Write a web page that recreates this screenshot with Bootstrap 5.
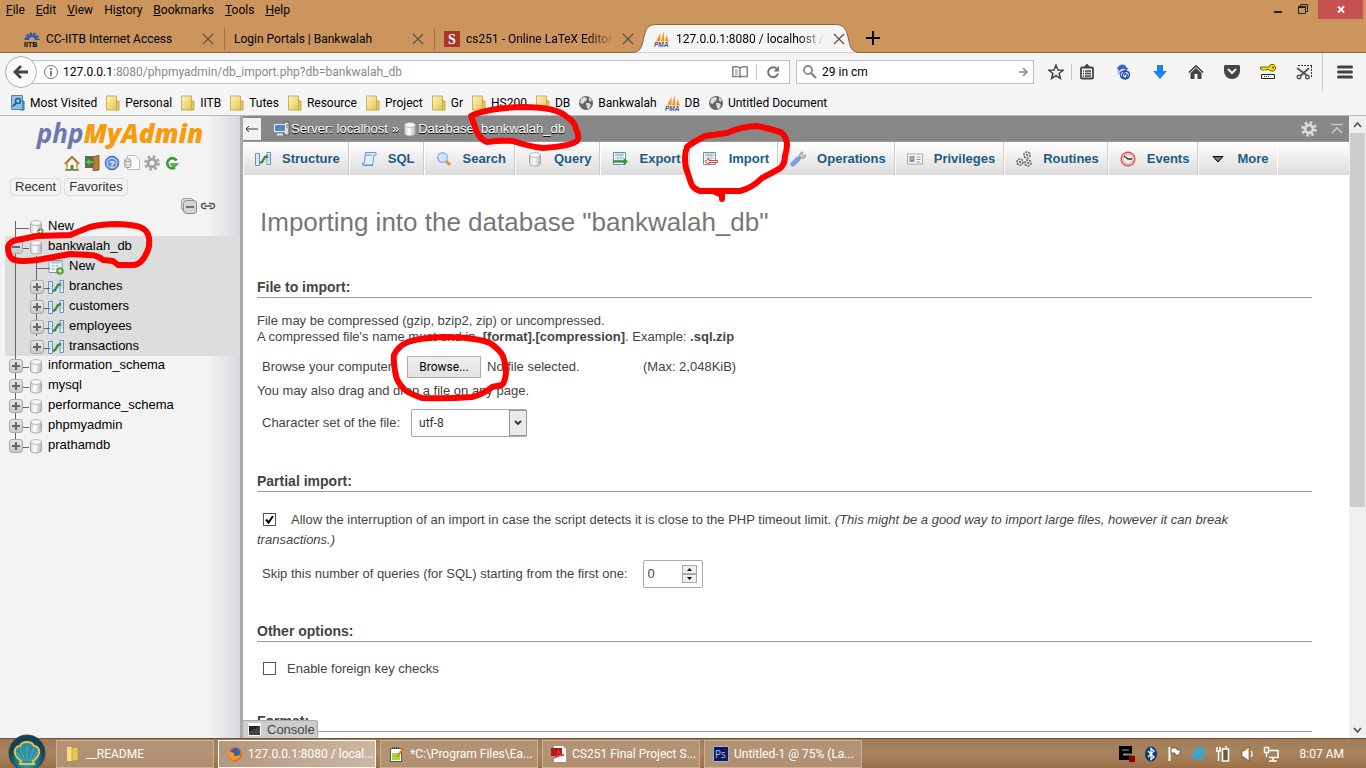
<!DOCTYPE html>
<html lang="en">
<head>
<meta charset="utf-8">
<meta name="viewport" content="width=device-width, initial-scale=1">
<title>127.0.0.1:8080 / localhost / bankwalah_db | phpMyAdmin</title>
<link href="https://cdn.jsdelivr.net/npm/bootstrap@5.3.0/dist/css/bootstrap.min.css" rel="stylesheet">
<style>
:root{--ui:Roboto,"Open Sans",sans-serif;--pma:"Liberation Sans",Arial,sans-serif}
body{font:12px/16px var(--ui);color:#000;background:#f5f5f5}
a{color:inherit;text-decoration:none}
button{font:inherit;color:inherit;background:none;border:0;padding:0}
svg{display:block;flex:none}
.i16{width:16px;height:16px}
/* browser frame */
.frame-top{background:#cc955d;height:53px;border-bottom:1px solid #8a653f}
.menus{height:20px;padding-left:6px;gap:11px}
.winctl{right:3px;top:0;height:19px}
.winctl button{width:26px;height:19px}
.winctl .wclose{width:45px;margin-left:2px;background:#c75050}
.tabstrip{height:32px;padding-left:15px}
.ftab{width:210px;height:22px;padding:0 8px 0 9px;gap:6px;margin-top:5px;border-right:1px solid #9f7246}
.ftab.last{border-color:transparent}
.fade-end{min-width:0;overflow:hidden;-webkit-mask-image:linear-gradient(90deg,#000 82%,transparent);mask-image:linear-gradient(90deg,#000 82%,transparent)}
.ftab-on{width:210px;height:29px;margin-top:4px;padding:1px 8px 0 9px;gap:6px}
.ftab-on>.shape{left:-12px;top:0;width:226px;height:29px}
.newtab{margin:4px 0 0 10px}
.toolrow{height:38px;padding-left:5px}
.backbtn{width:32px;height:32px;border-radius:50%;border:1px solid #a9b0b8;background:#fbfbfb;z-index:2}
.field{height:24px;background:#fff;border:1px solid #b9c1ca}
.field input{border:0;outline:0;background:none;font:inherit;min-width:0;padding:0}
.urlbox{margin-left:-12px;padding:0 0 0 17px}
.urlrest{color:#888}
.searchbox{width:238px;margin-left:6px;padding:0 5px;gap:4px}
.starbtn{padding:0 7px 0 14px}
.tbtn{width:36px;height:30px}
.tbtn.tight{width:30px}
.vsep{width:1px;background:#c8c8c8;height:16px}
.menubtn{padding:0 13px 0 14px}
.marks{height:25px;padding-left:10px;gap:8px;border-bottom:1px solid #b9b9b9}
.marks a{gap:4px}
/* phpMyAdmin */
.pma{font:13px/16px var(--pma);color:#444;min-height:0}
.side{width:240px;background:linear-gradient(90deg,#f3f3f3 87%,#d8dade);color:#000}
.side-grip{width:3px;background:#aaa}
.logo{font:italic 700 26px/32px "Open Sans","Noto Sans",sans-serif;color:#6c78af;height:38px;padding-top:1px}
.logo b{color:#f89c0e}
.side-icons{height:18px;gap:4px;padding-left:4px}
.pill{padding:6px 0 0 10px;gap:3px}
.pill button{border:1px solid #ddd;border-radius:4px;height:18px;padding:0 4px;color:#333;line-height:16px}
.panelctl{padding:2px 24px 2px 0;gap:3px}
.tree{padding-left:5px}
.tree ul{list-style:none;margin:0;padding:0}
.node{height:20px;position:relative}
.node>svg{margin-right:4px;margin-top:2px}
.tree>ul>li>.node{padding-left:23px}
.tree .kid{padding-left:43px}
.kid>svg{margin-right:5px}
.pm{position:absolute;width:14px;height:14px;border:1px solid #aaa;border-radius:3px;background:linear-gradient(#e6e6e6,#c9c9c9);left:4px;top:4px;z-index:1}
.pm::before,.pm.plus::after{content:"";position:absolute;background:#666;left:2px;top:5px;width:8px;height:2px}
.pm.plus::after{left:5px;top:2px;width:2px;height:8px}
.kid .pm{left:25px}
.node::before{content:"";position:absolute;left:10px;top:0;bottom:0;border-left:1px solid #666}
.node::after{content:"";position:absolute;left:11px;top:12px;width:13px;border-top:1px solid #666}
.tree .first::before{top:5px}
.tree .end::before{bottom:10px}
.kid::after{left:32px}
.kid i{position:absolute;left:31px;top:0;bottom:0;border-left:1px solid #666}
.open{background:#ddd;margin-bottom:-1px}
.crumbs{height:26px;background:#888;border-bottom:1px solid #999;color:#fff;text-shadow:0 1px 0 #000}
.hide-nav{width:18px;height:22px;background:#f2f2f2;color:#333;text-shadow:none}
.crumbs .trail{padding-left:13px}
.crumbs .sep{margin:0 3px 0 4px}
.topmenu{height:33px;background:linear-gradient(#fff,#dcdcdc);font-weight:700}
.topmenu a{color:#235a81;height:33px;padding:0 8px 0 11px;gap:11px;border-right:1px solid #ccc;border-left:1px solid #fff}
.topmenu a.on{background:#fff}
.topmenu a.more{border-color:#fff}
.sheet{padding:0 37px 0 14px;background:#fff;min-height:0}
.sheet h2{font:26px/32px var(--pma);color:#777;margin:31px 0 39px 3px}
.sheet h3{font:bold 14px/20px var(--pma);color:#444;border-bottom:1px solid #999;margin:0}
.s1{height:194px}.s2{height:150px}.s3{height:90px}
.note{padding-top:15px}
.in5{padding-left:5px}
.browse-row{height:44px}
.browse-row label{width:145px}
.picked{width:162px;padding-left:6px}
.drag{line-height:20px;margin-top:-8px}
.cs-row{padding-top:8px}
.allow{padding:18px 30px 0 0;line-height:20px}
.allow label{margin-left:15px}
.skip-row{padding-top:10px}
.fk-row{padding-top:17px;line-height:20px}
.fk-row label{margin-left:11px}
.browse{font:12px/18px var(--ui);border:1px solid #acacac;background:linear-gradient(#f0f0f0,#e2e2e2);color:#000;width:74px;height:22px}
.selwrap{width:116px;height:28px;margin-left:11px}
.selwrap select{appearance:none;width:100%;height:100%;border:1px solid #aaa;border-radius:2px;background:#fff;padding:0 7px;font:12px/20px var(--ui);color:#333}
.selwrap span{right:0;top:1px;width:18px;height:26px;border:1px solid #999;background:#eaeaea;pointer-events:none}
.tick{appearance:none;width:13px;height:13px;border:1px solid #555;background:#fff;margin:0 0 0 1px;vertical-align:-2px}
.tick:checked{background:#fff url("data:image/svg+xml,%3Csvg xmlns='http://www.w3.org/2000/svg' viewBox='0 0 11 11'%3E%3Cpath d='M2 5.5l2.5 3L9 2' fill='none' stroke='%23000' stroke-width='2'/%3E%3C/svg%3E")}
.numwrap{width:60px;height:28px;border:1px solid #aaa;border-radius:2px;background:#fff;margin-left:15px;padding:0 5px 0 4px}
.numwrap input{appearance:textfield;border:0;outline:0;width:34px;font:inherit;color:#444;padding:0}
.numwrap input::-webkit-inner-spin-button{display:none}
.spin{width:15px}
.spin button{height:9px;width:15px;border:1px solid #aaa;background:#eee}
.console{left:0;bottom:0;height:18px;width:75px;background:#ccc;border:1px solid #aaa;border-bottom:0;border-left:0;border-top-right-radius:3px;padding-left:5px;gap:6px}
.sbar{width:17px;background:#f0f0f0;padding:0 1px}
.sbar .cap{height:17px}
.sbar .thumb{height:374px;background:#cdcdcd}
/* taskbar */
.taskbar{height:30px;background:linear-gradient(#a07b59,#a9845f 45%,#9b7048);border-top:1px solid #76502e;color:#fff;padding-left:56px}
.task{width:158px;height:28px;border:1px solid #cbb296;background:#b5977acc;padding:0 8px;gap:5px;margin-right:4px}
.task.on{border-color:#fff;background:linear-gradient(100deg,#b3967b,#cdb8a4)}
.task span{white-space:nowrap}
.startbtn{left:8px;bottom:-4px;width:38px;height:38px}
.tray{gap:8px;padding-right:22px}
.clock{margin-left:13px}
.ink{inset:0;pointer-events:none;z-index:9}
</style>
</head>
<body class="vh-100 d-flex flex-column overflow-hidden position-relative">
<svg width="0" height="0" class="position-absolute" aria-hidden="true"><defs>
<symbol id="x" viewBox="0 0 16 16"><path d="M3 3l10 10M13 3L3 13" stroke="#5f5040" stroke-width="1.2"/></symbol>
<linearGradient id="gF" x2="1" y2="1"><stop stop-color="#fff6c0"/><stop offset="1" stop-color="#e3c44f"/></linearGradient>
<linearGradient id="gD"><stop stop-color="#d0d0d0"/><stop offset=".4" stop-color="#fff"/><stop offset="1" stop-color="#b5b5b5"/></linearGradient>
<symbol id="folder" viewBox="0 0 16 16"><path d="M10 6h4v9h-4z" fill="#e5cb60" stroke="#b59a3c" stroke-width=".8"/><path d="M1.500 1h10v14h-10z" fill="url(#gF)" stroke="#c5a84a" stroke-width=".9"/></symbol>
<symbol id="globe" viewBox="0 0 16 16"><circle cx="8" cy="8" r="7" fill="#666"/><path d="M3 4l3-2 3 1-1 3-2 1-1 2-3-1zM8 8l3 0 2 2-2 4-2-1zM11 2l3 3-2 2-1-2z" fill="#ddd"/></symbol>
<symbol id="pmaicon" viewBox="0 0 16 16"><path d="M2 10.500 6.500 2v8zM7 10.500 9.500 0l1 10.500zM11 10.500 12.300 4l2.700 6.500z" fill="#f8951d"/><text x="0" y="16" font-family="Liberation Sans" font-size="6.500" font-weight="700" font-style="italic" fill="#44518f">PMA</text></symbol>
<symbol id="db" viewBox="0 0 16 16"><path d="M2.500 4v8.500c0 3.300 11 3.300 11 0V4z" fill="url(#gD)" stroke="#9a9a9a" stroke-width=".8"/><ellipse cx="8" cy="4" rx="5.500" ry="2.400" fill="#f6f6f6" stroke="#aaa" stroke-width=".8"/></symbol>
<symbol id="plusdot" viewBox="0 0 8 8"><circle cx="4" cy="4" r="3.500" fill="#5a9c3c"/><path d="M4 2v4M2 4h4" stroke="#fff"/></symbol>
<symbol id="tbl" viewBox="0 0 16 16"><path d="M.5 2.500h4v12h-4zM12 1.500h3.500v12H12z" fill="#eef5ff" stroke="#5f8fd0"/><path d="M1.500 5h2M1.500 7.500h2M1.500 10h2M13 4h2M13 6.500h2M13 9h2" stroke="#9bc0ea"/><path d="M5 12l2-1 3-5 3-1" fill="none" stroke="#3b8a34" stroke-width="2.400"/></symbol>
<symbol id="tnew" viewBox="0 0 16 16"><path d="M1 1.500h13v12H1z" fill="#fff" stroke="#6a96cc"/><path d="M3 4h9M3 7h9M3 10h9M5 3v9M9 3v9" stroke="#a9c9ee"/><path d="M2 3h11" stroke="#7fb86a"/><circle cx="12" cy="12" r="3.800" fill="#5a9c3c"/><path d="M12 10v4M10 12h4" stroke="#fff"/></symbol>
<symbol id="grid" viewBox="0 0 16 16"><path d="M1.500 1.500h12v12h-12z" fill="#fff" stroke="#5f8fd0"/><path d="M3 4.500h9M3 7h9M3 9.500h9M6 3v8M9 3v8" stroke="#9dbfe8"/><path d="M3 3h9" stroke="#8ac07a"/></symbol>
<symbol id="gear" viewBox="0 0 16 16"><circle cx="8" cy="8" r="6.500" fill="none" stroke="currentColor" stroke-width="2.600" stroke-dasharray="2.550 2.550"/><circle cx="8" cy="8" r="3.900" fill="none" stroke="currentColor" stroke-width="2.800"/></symbol>
</defs></svg>

<header>
<div class="frame-top position-relative">
  <nav class="menus d-flex align-items-center" aria-label="Menu bar">
    <a href="#"><u>F</u>ile</a><a href="#"><u>E</u>dit</a><a href="#"><u>V</u>iew</a><a href="#">Hi<u>s</u>tory</a><a href="#"><u>B</u>ookmarks</a><a href="#"><u>T</u>ools</a><a href="#"><u>H</u>elp</a>
  </nav>
  <div class="winctl position-absolute d-flex">
    <button aria-label="Minimize"><svg width="26" height="19"><path d="M10 12h8" stroke="#222" stroke-width="2"/></svg></button>
    <button aria-label="Restore"><svg width="26" height="19"><path d="M8.500 6.500h7v7h-7zM10.500 6V4.500h7v7H16" fill="none" stroke="#222"/><path d="M8 7h8" stroke="#222" stroke-width="2"/></svg></button>
    <button class="wclose" aria-label="Close"><svg width="45" height="19"><path d="M20 6.500l6 6M26 6.500l-6 6" stroke="#fff" stroke-width="1.800"/></svg></button>
  </div>
  <div class="tabstrip d-flex align-items-center">
    <div class="ftab d-flex align-items-center"><svg class="i16"><path d="M2 9a6 6 0 0 1 12 0" fill="none" stroke="#2a54ad" stroke-width="3" stroke-dasharray="2.400 1"/><path d="M4 9a4 4 0 0 1 8 0" fill="none" stroke="#2a54ad" stroke-width="2"/><text x="0" y="16" font-size="7" font-weight="700" font-family="Liberation Sans">IITB</text></svg><span class="flex-grow-1 text-nowrap">CC-IITB Internet Access</span><button aria-label="Close tab"><svg class="i16"><use href="#x"/></svg></button></div>
    <div class="ftab d-flex align-items-center"><span class="flex-grow-1 text-nowrap">Login Portals | Bankwalah</span><button aria-label="Close tab"><svg class="i16"><use href="#x"/></svg></button></div>
    <div class="ftab last d-flex align-items-center"><svg class="i16"><rect width="16" height="16" rx="1" fill="#a93529"/><text x="4" y="13" font-size="14" font-weight="700" font-family="Liberation Serif" fill="#fff">S</text></svg><span class="flex-grow-1 text-nowrap fade-end">cs251 - Online LaTeX Editor S</span><button aria-label="Close tab"><svg class="i16"><use href="#x"/></svg></button></div>
    <div class="ftab-on d-flex align-items-center position-relative"><svg class="shape position-absolute" viewBox="0 0 226 29"><path d="M0 28.500C10 28 9 18 12 9 14 2 18 .5 24 .5H202c6 0 10 2 12 9 3 9 2 18.500 12 19V29H0z" fill="#f5f5f5" stroke="#8a653f"/><path d="M3 29h220" stroke="#f5f5f5" stroke-width="1"/></svg><svg class="i16 position-relative"><use href="#pmaicon"/></svg><span class="flex-grow-1 text-nowrap fade-end position-relative">127.0.0.1:8080 / localhost / b</span><button class="position-relative" aria-label="Close tab"><svg class="i16"><use href="#x"/></svg></button></div>
    <button class="newtab" aria-label="New tab"><svg class="i16"><path d="M8 1v14M1 8h14" stroke="#000" stroke-width="2"/></svg></button>
  </div>
</div>
<div class="toolrow d-flex align-items-center">
  <button class="backbtn d-flex align-items-center justify-content-center position-relative" aria-label="Back"><svg class="i16"><path d="M8 2L2 8l6 6M2.500 8H15" fill="none" stroke="#444" stroke-width="2.800"/></svg></button>
  <div class="field urlbox d-flex align-items-center flex-grow-1">
    <svg class="i16"><circle cx="8" cy="8" r="6.500" fill="none" stroke="#777"/><path d="M8 7v5M8 4v2" stroke="#666" stroke-width="1.600"/></svg>
    <div class="flex-grow-1 ps-1" role="textbox" aria-label="Address">127.0.0.1<span class="urlrest">:8080/phpmyadmin/db_import.php?db=bankwalah_db</span></div>
    <button class="me-2" aria-label="Reader view"><svg class="i16"><path d="M8 4C6 2.500 3 2.500.8 3v9.500h14.400V3C13 2.500 10 2.500 8 4zm0 0v10" fill="none" stroke="#888" stroke-width="1.600"/><path d="M3 6h3M3 8h3M3 10h3" stroke="#888"/></svg></button>
    <span class="vsep"></span>
    <button class="mx-2" aria-label="Reload"><svg class="i16"><path d="M12 5A5 5 0 1 0 13 9.500" fill="none" stroke="#777" stroke-width="2"/><path d="M14 2v5.500H8.500z" fill="#777"/></svg></button>
  </div>
  <div class="field searchbox d-flex align-items-center">
    <svg class="i16"><circle cx="6" cy="6" r="4" fill="none" stroke="#888" stroke-width="1.800"/><path d="M9 9l5 5" stroke="#888" stroke-width="2.400"/></svg>
    <input class="flex-grow-1" aria-label="Search" value="29 in cm">
    <svg width="10" height="10"><path d="M1 5h8M5 1l4 4-4 4" fill="none" stroke="#888" stroke-width="1.500"/></svg>
  </div>
  <button class="starbtn" aria-label="Bookmark"><svg class="i16"><path d="M8 1.200l2 4.800 5 .3-3.900 3.200 1.300 5L8 11.700l-4.400 2.800 1.300-5L1 6.300 6 6z" fill="none" stroke="#444" stroke-width="1.500"/></svg></button>
  <span class="vsep"></span>
  <button class="tbtn tight d-flex align-items-center justify-content-center" aria-label="Bookmarks list"><svg class="i16"><path d="M3 3.500h10a1 1 0 0 1 1 1v9a1 1 0 0 1-1 1H3a1 1 0 0 1-1-1v-9a1 1 0 0 1 1-1z" fill="none" stroke="#444" stroke-width="1.800"/><path d="M5 4l3-3.500L11 4M4 7h1M6 7h6M4 9.500h1M6 9.500h6M4 12h1M6 12h6" stroke="#444" stroke-width="1.300" fill="#444"/></svg></button>
  <button class="tbtn ms-1 d-flex align-items-center justify-content-center" aria-label="Chameleon"><svg class="i16"><path d="M4 1C6 0 10 0 10 3l3 2H6L3 7 1 4z" fill="#3663cc"/><path d="M1 6l4 2-3 3z" fill="#a9bfee"/><path d="M9 11.500a1 1 0 1 1 1.200-1.700 2.400 2.400 0 1 1-3.700 2.400C6 9 9 7 11.500 7.500c3 1.500 2.500 7-2 7.500C5 15 3 11 5 8l6-2.500" fill="none" stroke="#2450c0" stroke-width="1.400"/></svg></button>
  <button class="tbtn d-flex align-items-center justify-content-center" aria-label="Downloads"><svg class="i16"><path d="M5 1h6v6h4l-7 8-7-8h4z" fill="#1a83f0"/></svg></button>
  <button class="tbtn d-flex align-items-center justify-content-center" aria-label="Home"><svg class="i16"><path d="M8 4l5.500 5v6H9.500v-5h-3v5h-4V9z" fill="#444"/><path d="M.8 8.500L8 1.800l7.200 6.700" fill="none" stroke="#444" stroke-width="1.700"/></svg></button>
  <button class="tbtn d-flex align-items-center justify-content-center" aria-label="Pocket"><svg class="i16"><path d="M1.500 1h13A1.500 1.500 0 0 1 16 2.500V7A8 8 0 0 1 0 7V2.500A1.500 1.500 0 0 1 1.500 1z" fill="#444"/><path d="M4.500 5.500L8 9l3.500-3.500" fill="none" stroke="#f5f5f5" stroke-width="2" stroke-linecap="round"/></svg></button>
  <button class="tbtn d-flex align-items-center justify-content-center" aria-label="Passwords"><svg class="i16"><path d="M.5 3h8.700l1.300-2.500h3.500l1.500 2v2.500l-1.500 2h-3.500L9 5.500H6.500l-1 1-1-1-1 1-1-1-1 .5-1-1z" fill="#f5d800" stroke="#7a6600"/><circle cx="13" cy="3.500" r="1" fill="#5a4a00"/><path d="M1.500 10.500h13v4h-13z" fill="#fff" stroke="#222"/><path d="M4 12.500h5" stroke="#222" stroke-dasharray="1 1"/></svg></button>
  <button class="tbtn d-flex align-items-center justify-content-center" aria-label="Screenshot"><svg class="i16"><path d="M2 1.500h14M15.500 2v11" stroke="#333" stroke-dasharray="2 1" fill="none"/><path d="M1 4l10 7.500M13 4l-8.500 8" stroke="#555" stroke-width="1.800"/><circle cx="3" cy="13" r="1.800" fill="none" stroke="#555" stroke-width="1.400"/><circle cx="11.500" cy="13" r="1.800" fill="none" stroke="#555" stroke-width="1.400"/></svg></button>
  <span class="vsep h-100"></span>
  <button class="menubtn" aria-label="Open menu"><svg class="i16"><path d="M1.500 3h13M1.500 8h13M1.500 13h13" stroke="#444" stroke-width="3" stroke-linecap="round"/></svg></button>
</div>
<nav class="marks d-flex align-items-center" aria-label="Bookmarks">
  <a class="d-flex" href="#"><svg class="i16"><path d="M10 6h4v9h-4z" fill="#5a9cc8" stroke="#37749f"/><path d="M1.500.5h11v14h-11z" fill="#8cc4e8" stroke="#4a87b3"/><circle cx="8" cy="6" r="2.500" fill="none" stroke="#2c5f88" stroke-width="1.500"/><path d="M6 8l-3 3.500" stroke="#2c5f88" stroke-width="2"/></svg>Most Visited</a>
  <a class="d-flex" href="#"><svg class="i16"><use href="#folder"/></svg>Personal</a>
  <a class="d-flex" href="#"><svg class="i16"><use href="#folder"/></svg>IITB</a>
  <a class="d-flex" href="#"><svg class="i16"><use href="#folder"/></svg>Tutes</a>
  <a class="d-flex" href="#"><svg class="i16"><use href="#folder"/></svg>Resource</a>
  <a class="d-flex" href="#"><svg class="i16"><use href="#folder"/></svg>Project</a>
  <a class="d-flex" href="#"><svg class="i16"><use href="#folder"/></svg>Gr</a>
  <a class="d-flex" href="#"><svg class="i16"><use href="#folder"/></svg>HS200</a>
  <a class="d-flex" href="#"><svg class="i16"><use href="#folder"/></svg>DB</a>
  <a class="d-flex" href="#"><svg class="i16"><use href="#globe"/></svg>Bankwalah</a>
  <a class="d-flex" href="#"><svg class="i16"><use href="#pmaicon"/></svg>DB</a>
  <a class="d-flex" href="#"><svg class="i16"><use href="#globe"/></svg>Untitled Document</a>
</nav>
</header>

<div class="pma d-flex flex-grow-1">
<aside class="side flex-shrink-0 overflow-hidden">
  <div class="logo text-center">php<b>MyAdmin</b></div>
  <div class="side-icons d-flex justify-content-center align-items-center">
    <a href="#" aria-label="Home"><svg class="i16"><path d="M3 8v6.500h10V8" fill="#fff4dc" stroke="#9a6a33"/><path d="M1 9l7-7 7 7" fill="none" stroke="#b3732e" stroke-width="2"/><path d="M6.500 15v-5h3v5z" fill="#5a8a3c"/><path d="M1 15h14" stroke="#57913b" stroke-width="1.500"/></svg></a>
    <a href="#" aria-label="Log out"><svg class="i16"><path d="M1 1h9v12H1z" fill="#5c6a60"/><path d="M9 2l6-2v15l-6 1z" fill="#c07a35" stroke="#84501d" stroke-width=".8"/><path d="M1 7l5-4v2.500h4v3H6V11z" fill="#63c043" stroke="#2e7d22" stroke-width=".7"/></svg></a>
    <a href="#" aria-label="Documentation"><svg class="i16"><circle cx="8" cy="8" r="6.800" fill="#5b8fd3" stroke="#3b6bb0"/><circle cx="8" cy="8" r="4.900" fill="none" stroke="#dbe9fb"/><text x="5.300" y="11.500" font-size="9" font-weight="700" fill="#fff">?</text></svg></a>
    <a href="#" aria-label="Query window"><svg class="i16"><path d="M3.500.5h8l4 4v10h-12z" fill="#fbfbfb" stroke="#bbb"/><path d="M.8 5v6.500c0 1.500 6 1.500 6 0V5z" fill="#ddd" stroke="#999"/><ellipse cx="3.800" cy="5" rx="3" ry="1.300" fill="#fff" stroke="#999"/></svg></a>
    <a href="#" aria-label="Settings" style="color:#a3a3a3"><svg class="i16"><use href="#gear"/></svg></a>
    <a href="#" aria-label="Reload"><svg class="i16"><path d="M12.500 5.500A5 5 0 1 0 11 12.500" fill="none" stroke="#3f9a3b" stroke-width="2.800"/><path d="M6 8.500h8.500L10 13.500z" fill="#56b24b" stroke="#3f9a3b" stroke-width=".6"/></svg></a>
  </div>
  <div class="pill d-flex"><button>Recent</button><button>Favorites</button></div>
  <div class="panelctl d-flex justify-content-end align-items-center"><a href="#" aria-label="Collapse all"><svg class="i16"><rect x=".5" y=".5" width="12" height="12" rx="3" fill="#ddd" stroke="#999"/><rect x="2.500" y="2.500" width="13" height="13" rx="3" fill="#d5d5d5" stroke="#888"/><path d="M5 9h8" stroke="#555" stroke-width="1.600"/></svg></a><a href="#" aria-label="Unlink from main panel"><svg class="i16"><path d="M6 5.500H4a2.500 2.500 0 0 0 0 5h2.500M9 5.500h3a2.500 2.500 0 0 1 0 5H9.500M4.500 8h7" fill="none" stroke="#555" stroke-width="1.500"/></svg></a></div>
  <nav class="tree" aria-label="Databases"><ul>
    <li><div class="node first d-flex align-items-center"><svg class="i16"><use href="#db"/><use href="#plusdot" x="9" y="9" width="7" height="7"/></svg><a href="#">New</a></div></li>
    <li class="open"><div class="node d-flex align-items-center"><button class="pm" aria-label="Collapse"></button><svg class="i16"><use href="#db"/></svg><a href="#">bankwalah_db</a></div>
      <ul>
      <li class="node kid d-flex align-items-center"><i></i><svg class="i16"><use href="#tnew"/></svg><a href="#">New</a></li>
      <li class="node kid d-flex align-items-center"><i></i><button class="pm plus" aria-label="Expand"></button><svg class="i16"><use href="#tbl"/></svg><a href="#">branches</a></li>
      <li class="node kid d-flex align-items-center"><i></i><button class="pm plus" aria-label="Expand"></button><svg class="i16"><use href="#tbl"/></svg><a href="#">customers</a></li>
      <li class="node kid d-flex align-items-center"><i></i><button class="pm plus" aria-label="Expand"></button><svg class="i16"><use href="#tbl"/></svg><a href="#">employees</a></li>
      <li class="node kid d-flex align-items-center"><button class="pm plus" aria-label="Expand"></button><svg class="i16"><use href="#tbl"/></svg><a href="#">transactions</a></li>
      </ul></li>
    <li><div class="node d-flex align-items-center"><button class="pm plus" aria-label="Expand"></button><svg class="i16"><use href="#db"/></svg><a href="#">information_schema</a></div></li>
    <li><div class="node d-flex align-items-center"><button class="pm plus" aria-label="Expand"></button><svg class="i16"><use href="#db"/></svg><a href="#">mysql</a></div></li>
    <li><div class="node d-flex align-items-center"><button class="pm plus" aria-label="Expand"></button><svg class="i16"><use href="#db"/></svg><a href="#">performance_schema</a></div></li>
    <li><div class="node d-flex align-items-center"><button class="pm plus" aria-label="Expand"></button><svg class="i16"><use href="#db"/></svg><a href="#">phpmyadmin</a></div></li>
    <li><div class="node end d-flex align-items-center"><button class="pm plus" aria-label="Expand"></button><svg class="i16"><use href="#db"/></svg><a href="#">prathamdb</a></div></li>
  </ul></nav>
</aside>
<div class="side-grip flex-shrink-0"></div>
<main class="flex-grow-1 bg-white position-relative overflow-hidden d-flex flex-column">
  <div class="crumbs d-flex align-items-center flex-shrink-0">
    <button class="hide-nav d-flex align-items-center justify-content-center" aria-label="Hide panel"><svg width="14" height="10"><path d="M1 5h12M4 2L1 5l3 3" fill="none" stroke="#333"/></svg></button>
    <div class="trail d-flex align-items-center flex-grow-1">
      <svg class="i16"><path d="M10 1h5v13h-5z" fill="#ddd" stroke="#555"/><path d="M11 4h3M11 6h3" stroke="#888"/><path d="M.5 3.500h11v7H.5z" fill="#4f86c9" stroke="#eee"/><path d="M3 13.500h6" stroke="#ddd" stroke-width="2"/></svg>
      <a href="#">&#8202;Server: localhost</a><span class="sep">»</span><svg class="i16"><use href="#db"/></svg><a href="#" class="text-nowrap">Database: bankwalah_db</a>
    </div>
    <a href="#" aria-label="Page settings" style="color:#ddd"><svg class="i16"><use href="#gear"/></svg></a>
    <a class="ms-2 me-1 ps-1" href="#" aria-label="Collapse"><svg class="i16"><path d="M2 3.500h12M3 12l5-5 5 5" fill="none" stroke="#c4c4c4" stroke-width="1.700"/></svg></a>
  </div>
  <nav class="topmenu d-flex flex-shrink-0" aria-label="Database">
    <a class="d-flex align-items-center" href="#"><svg class="i16"><use href="#tbl"/></svg>Structure</a>
    <a class="d-flex align-items-center" href="#"><svg class="i16"><path d="M4.500 1.500H15v2.500h-2l-1.500 10H1.500v-2h2z" fill="#e3efff" stroke="#6b95d2"/><path d="M5 4h6M2 14.500h10" stroke="#6b95d2"/></svg>SQL</a>
    <a class="d-flex align-items-center" href="#"><svg class="i16"><path d="M9 9l5 5" stroke="#d19545" stroke-width="3"/><circle cx="6.500" cy="6.500" r="4.800" fill="#cfe3fb" stroke="#8fb4e2" stroke-width="1.400"/></svg>Search</a>
    <a class="d-flex align-items-center" href="#"><svg class="i16"><use href="#db"/></svg>Query</a>
    <a class="d-flex align-items-center" href="#"><svg class="i16"><use href="#grid"/><path d="M1 10.500h12" stroke="#3f9136" stroke-width="2.400"/><path d="M11.500 7l4.500 3.500-4.500 3.500z" fill="#3f9136"/></svg>Export</a>
    <a class="on d-flex align-items-center" href="#"><svg class="i16"><use href="#grid"/><path d="M15.500 9.500H7V7.500l-4 3 4 3v-2h8.500z" fill="#fff" stroke="#e33a2f"/></svg>Import</a>
    <a class="d-flex align-items-center" href="#"><svg class="i16"><path d="M8 8l3-3" stroke="#999" stroke-width="3"/><path d="M10 6a3.300 3.300 0 0 1 3-5l-1 2.500 1.500 1.500L16 4a3.300 3.300 0 0 1-5 3z" fill="#ccc" stroke="#888" stroke-width=".8"/><path d="M3 13l5-5" stroke="#7ba1da" stroke-width="5" stroke-linecap="round"/></svg>Operations</a>
    <a class="d-flex align-items-center" href="#"><svg class="i16"><path d="M.5 3h15v10H.5z" fill="#fafafa" stroke="#aaa"/><path d="M2.500 5h5v6h-5z" fill="#5d99d8"/><circle cx="5" cy="7.500" r="1.600" fill="#e0ab6b"/><path d="M9.500 6h4M9.500 8.500h4M9.500 11h4" stroke="#999"/></svg>Privileges</a>
    <a class="d-flex align-items-center" href="#"><svg class="i16"><g fill="none" stroke="#666" stroke-width="1.600" stroke-dasharray="2 1"><circle cx="11" cy="4" r="3"/><circle cx="4" cy="11" r="3"/><circle cx="12" cy="12" r="3"/></g><g fill="#555"><circle cx="11" cy="4" r="1"/><circle cx="4" cy="11" r="1"/><circle cx="12" cy="12" r="1"/></g></svg>Routines</a>
    <a class="d-flex align-items-center" href="#"><svg class="i16"><circle cx="8" cy="8" r="6.800" fill="#fff" stroke="#e8514a" stroke-width="1.600"/><circle cx="8" cy="8" r="5" fill="#eee" stroke="#999" stroke-width=".8"/><path d="M4 5l4 3h4" fill="none" stroke="#333" stroke-width="1.300"/></svg>Events</a>
    <a class="more d-flex align-items-center" href="#"><svg class="i16"><path d="M3 5.500h10L8 11z" fill="#777" stroke="#000"/></svg>More</a>
  </nav>
  <form class="sheet flex-grow-1 overflow-hidden" onsubmit="return false">
    <h2>Importing into the database "bankwalah_db"</h2>
    <section class="s1">
      <h3>File to import:</h3>
      <div class="note">File may be compressed (gzip, bzip2, zip) or uncompressed.<br>A compressed file's name must end in <b>.[format].[compression]</b>. Example: <b>.sql.zip</b></div>
      <div class="in5 browse-row d-flex align-items-center"><label for="up">Browse your computer:</label><input id="up" type="file" class="visually-hidden" tabindex="-1"><button type="button" class="browse">Browse...</button><span class="picked">No file selected.</span><span>(Max: 2,048KiB)</span></div>
      <div class="drag">You may also drag and drop a file on any page.</div>
      <div class="in5 cs-row d-flex align-items-center"><label for="cs">Character set of the file:</label><div class="selwrap position-relative"><select id="cs"><option>utf-8</option></select><span class="position-absolute d-flex align-items-center justify-content-center"><svg width="8" height="8"><path d="M1 2l3 3 3-3" fill="none" stroke="#333" stroke-width="1.800"/></svg></span></div></div>
    </section>
    <section class="s2">
      <h3>Partial import:</h3>
      <div class="allow"><span class="in5"></span><input class="tick" type="checkbox" id="ai" checked><label for="ai" class="d-inline">Allow the interruption of an import in case the script detects it is close to the PHP timeout limit. <i>(This might be a good way to import large files, however it can break transactions.)</i></label></div>
      <div class="in5 skip-row d-flex align-items-center"><label for="sk">Skip this number of queries (for SQL) starting from the first one:</label><div class="numwrap d-flex align-items-center justify-content-between"><input id="sk" type="number" value="0"><div class="spin d-flex flex-column"><button type="button" aria-label="Increase"><svg width="13" height="7"><path d="M4 5l2.500-3L9 5z"/></svg></button><button type="button" aria-label="Decrease"><svg width="13" height="7"><path d="M4 2l2.500 3L9 2z"/></svg></button></div></div></div>
    </section>
    <section class="s3">
      <h3>Other options:</h3>
      <div class="fk-row"><span class="in5"></span><input class="tick" type="checkbox" id="fk"><label for="fk">Enable foreign key checks</label></div>
    </section>
    <section><h3>Format:</h3></section>
  </form>
  <button class="console position-absolute d-flex align-items-center"><svg width="13" height="13"><path d="M0 0h13v13H0z" fill="#fff"/><path d="M1 3h11v9H1z" fill="#222"/><path d="M12 3L1 9v3h11z" fill="#444"/></svg>Console</button>
</main>
<div class="sbar flex-shrink-0 d-flex flex-column" aria-hidden="true">
  <div class="cap d-flex align-items-center justify-content-center"><svg width="9" height="8"><path d="M1 6l3.500-4L8 6" fill="none" stroke="#555" stroke-width="1.800"/></svg></div>
  <div class="thumb"></div>
  <div class="cap mt-auto d-flex align-items-center justify-content-center"><svg width="9" height="8"><path d="M1 2l3.500 4L8 2" fill="none" stroke="#555" stroke-width="1.800"/></svg></div>
</div>
</div>

<footer class="taskbar d-flex align-items-center position-relative flex-shrink-0">
  <button class="startbtn position-absolute" aria-label="Start"><svg viewBox="0 0 38 38"><defs><radialGradient id="gS" cy=".7"><stop stop-color="#4ec0cf"/><stop offset=".6" stop-color="#1d7386"/><stop offset="1" stop-color="#134350"/></radialGradient></defs><circle cx="19" cy="19" r="18" fill="url(#gS)" stroke="#2b4a50"/><path d="M13 27c-4-3-7-7-6-11 1-3 3-4 5-4 1-3 4-4 7-4s6 1 7 4c2 0 4 1 5 4 1 4-2 8-6 11l1 3H12z" fill="#2e8fa0" stroke="#eac34a" stroke-width="2"/><path d="M19 27V12M17 27l-5-13M21 27l5-13M15 27l-6-9M23 27l6-9" stroke="#5fbcc6" stroke-width=".7"/></svg></button>
  <button class="task d-flex align-items-center"><svg class="i16"><path d="M2 1h5v14H2z" fill="#f4dd85"/><path d="M7 2l6-1v13l-6 1z" fill="#e6c655" stroke="#b8963a" stroke-width=".7"/></svg><span>__README</span></button>
  <button class="task on d-flex align-items-center"><svg class="i16"><circle cx="8" cy="8" r="7" fill="#e66a17"/><circle cx="8.500" cy="6.500" r="4.500" fill="#2d64b0"/><path d="M1 5c2 1 3 1 6 2-1 3 2 4 6 2 0 5-8 7-11 2z" fill="#f59a20"/></svg><span>127.0.0.1:8080 / local...</span></button>
  <button class="task d-flex align-items-center"><svg class="i16"><path d="M1.500 2.500h11v13h-11z" fill="#fff" stroke="#555"/><path d="M3 2h8" stroke="#444" stroke-width="2" stroke-dasharray="1 1"/><path d="M3 7h8v7H3z" fill="#a5d83a"/><path d="M15 1L8 11" stroke="#d98324" stroke-width="2"/></svg><span>*C:\Program Files\Ea...</span></button>
  <button class="task d-flex align-items-center"><svg class="i16"><path d="M3 0h9l3 3v13H3z" fill="#fff"/><path d="M0 2h11v8H0z" fill="#b3161b"/><path d="M3 12c4-3 4-6 4-8 1 4 3 5 6 5-4 0-7 1-10 3z" fill="none" stroke="#d33" stroke-width="1.300"/></svg><span>CS251 Final Project S...</span></button>
  <button class="task d-flex align-items-center"><svg class="i16"><path d="M.5.5h15v15H.5z" fill="#1d1455" stroke="#8ab8ee"/><text x="2" y="12" font-size="10" font-family="Open Sans" fill="#8cc8ff">Ps</text></svg><span>Untitled-1 @ 75% (La...</span></button>
  <div class="tray d-flex align-items-center ms-auto">
    <svg class="i16"><path d="M0 0h13v14H0z" fill="#000"/><path d="M3 4h7" stroke="#b99" /><path d="M4 8.500h9" stroke="#987" stroke-width="2"/><path d="M10 10h6v6h-6z" fill="#8b0000"/></svg>
    <svg class="i16"><ellipse cx="8" cy="8" rx="6" ry="7.500" fill="#0b3a7a"/><path d="M5 5l6 6-3 2.500v-11L11 5l-6 6" fill="none" stroke="#fff" stroke-width="1.300"/></svg>
    <svg class="i16"><path d="M2.500 1v14" stroke="#fff" stroke-width="2"/><path d="M4 2h6v2h4l-2 5H8V7H4z" fill="#fff" stroke="#4d3a28" stroke-width=".7"/></svg>
    <svg class="i16"><path d="M12 11a4.800 4.800 0 1 1 1-3H5" fill="none" stroke="#1fb0f0" stroke-width="2.300"/><path d="M1 14C2 8 12 0 15 2" fill="none" stroke="#1fb0f0" stroke-width="1.300"/></svg>
    <svg class="i16"><path d="M7.500 3h6v12h-6z" fill="#75583c" stroke="#fff" stroke-width="1.600"/><path d="M10 1h2M1 5h5M2 1v4M5 1v4M3.500 5v10" stroke="#fff" stroke-width="1.500"/></svg>
    <svg class="i16"><path d="M3 5h2l5-4v14L5 11H3z" fill="#fff" stroke="#443" stroke-width=".6"/><path d="M12 5c1.500 2 1.500 4 0 6" fill="none" stroke="#fff" stroke-width="1.200"/></svg>
    <svg class="i16"><path d="M5 4.500h10v7H6M10 12v3M6 15h8" fill="none" stroke="#fff" stroke-width="1.500"/><path d="M1.500 1.500h4v5h-4zM3.500 7v4" fill="none" stroke="#fff" stroke-width="1.400"/></svg>
    <span class="clock">8:07 AM</span>
  </div>
</footer>

<svg class="ink position-absolute w-100 h-100" aria-hidden="true"><g fill="none" stroke="#f00" stroke-width="6" stroke-linecap="round" stroke-linejoin="round">
<path d="M471 116C480 111 495 108 523 107 545 107 560 110 567 117Q575 122 576 129 580 137 577 141 571 146 543 148 527 146 513 141 500 140 487 142 478 139 474 124Z"/>
<path d="M687 147Q690 144 705 136L727 133Q743 126 757 126 776 130 782 133C788 139 788 146 785 156Q785 165 779 169L762 178Q752 188 740 191H713L700 191Q693 189 691 183L686 168C684 158 685 152 687 147M713 191L722 195V199"/>
<path d="M394 355Q398 346 408 342 419 338 442 337 475 337 490 343 500 350 503 356 506 364 506 373 505 382 502 385L492 387Q482 395 472 397 445 399 422 398 408 393 405 390 397 382 396 376 393 362 394 355Z"/>
<path d="M8 247Q10 241 17 240L37 236 70 235Q80 231 90 227 102 224 117 224 135 225 140 227 148 230 149 238 150 247 147 252 142 264 134 265H118L113 261 103 260Q97 255 90 255L70 254 37 260Q20 262 15 260 8 258 8 247Z"/>
</g></svg>
<script src="https://cdn.jsdelivr.net/npm/bootstrap@5.3.0/dist/js/bootstrap.bundle.min.js"></script>
</body>
</html>
